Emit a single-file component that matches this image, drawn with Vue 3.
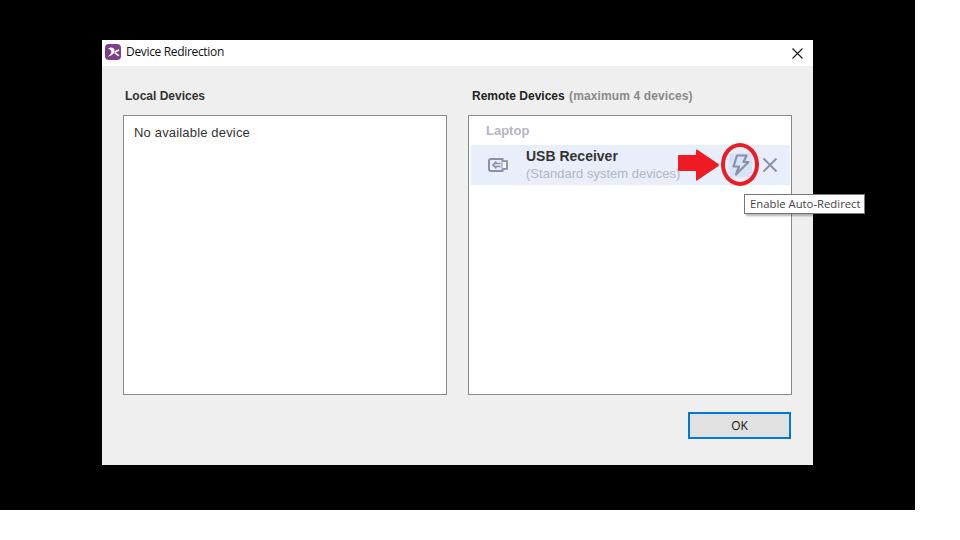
<script setup>
const title = 'Device Redirection'
</script>

<template>
  <div class="screen">
    <section class="dialog">
      <header class="titlebar">
        <div class="title-left">
          <svg class="logo" width="16" height="16" viewBox="0 0 16 16">
            <rect width="16" height="16" rx="4" fill="#7b3f8c" />
            <path d="M3 5C5 2.4 9.4 3.2 9.6 6.6C9.8 9.4 6.4 12 2.6 12.8C4.8 11 6.6 9.4 6.3 7.6C6 5.8 4.6 4.8 3 5Z" fill="#fff" />
            <path d="M10.4 7.8L13.4 6.2M10.2 9.2L13.4 11.4" stroke="#fff" stroke-width="1.6" stroke-linecap="round" />
          </svg>
          <span class="title-text">{{ title }}</span>
        </div>
        <svg class="close" width="11" height="11" viewBox="0 0 11 11">
          <path d="M.5.5l10 10M10.5.5l-10 10" stroke="#1a1a1a" stroke-width="1.1" fill="none" />
        </svg>
      </header>
      <div class="body">
        <div class="columns">
          <div class="column">
            <h2 class="heading local-heading">Local Devices</h2>
            <div class="panel local-panel">No available device</div>
          </div>
          <div class="column">
            <h2 class="heading remote-heading">Remote Devices <span class="muted">(maximum 4 devices)</span></h2>
            <div class="panel remote-panel">
              <div class="group">Laptop</div>
              <div class="device">
                <svg class="usb" width="20" height="14" viewBox="0 0 20 14" fill="none" stroke="#8b90a6" stroke-width="2">
                  <path d="M14.5 1H3A2 2 0 0 0 1 3V11A2 2 0 0 0 3 13H14.5Z" />
                  <path d="M14.5 3.2H19V10.8H14.5" stroke-width="1.8" fill="#f6f8fd" />
                  <path d="M12.5 5.6H6.5M12.5 8.4H6.5" stroke-width="1.5" />
                  <path d="M8.4 3.6L5 7L8.4 10.4" stroke-width="1.7" />
                </svg>
                <div class="device-text">
                  <div class="device-name">USB Receiver</div>
                  <div class="device-sub">(Standard system devices)</div>
                </div>
                <div class="actions">
                  <span class="bolt-box">
                    <svg width="20" height="24" viewBox="0 0 20 24" fill="none" stroke="#8b90a6" stroke-width="2.2" stroke-linejoin="round" stroke-linecap="round">
                      <path d="M6 2.5H15.5L12.5 9H17.5L5 21.5L8 13.5H2.5Z" />
                    </svg>
                  </span>
                  <svg class="remove" width="16" height="16" viewBox="0 0 16 16">
                    <path d="M1.5 1.5l13 13M14.5 1.5l-13 13" stroke="#8b90a6" stroke-width="2" fill="none" />
                  </svg>
                </div>
                <svg class="arrow" width="41" height="32" viewBox="0 0 41 32">
                  <path d="M1 6H18V1Q18 0 19 .6L40.5 15Q41 16 40.5 17L19 31.4Q18 32 18 31V22H1Q0 22 0 21V7Q0 6 1 6Z" fill="#ed1c24" />
                </svg>
                <span class="ring"></span>
                <div class="tooltip">Enable Auto-Redirect</div>
              </div>
            </div>
          </div>
        </div>
        <div class="footer">
          <button class="ok">OK</button>
        </div>
      </div>
    </section>
  </div>
</template>

<style>
html, body { margin: 0; background: #fff; }
</style>

<style scoped>
.screen {
  width: 915px;
  height: 510px;
  background: #000;
  padding: 40px 0 0 102px;
  box-sizing: border-box;
}
.dialog {
  width: 711px;
  height: 425px;
  background: #efefef;
  display: flex;
  flex-direction: column;
}
.titlebar {
  height: 26px;
  background: #fff;
  display: flex;
  align-items: center;
  justify-content: space-between;
  padding: 0 10px 0 3px;
}
.title-left { display: flex; align-items: center; gap: 5px; margin-top: -2px; }
.logo { display: block; flex: none; }
.title-text {
  font: 12px/16px "Open Sans", "Noto Sans", sans-serif;
  color: #111;
  letter-spacing: -0.33px;
}
.close { display: block; }
.body {
  flex: 1;
  display: flex;
  flex-direction: column;
  padding: 0 21px;
}
.columns { display: flex; gap: 21px; }
.column { width: 324px; }
.heading {
  margin: 0;
  height: 49px;
  box-sizing: border-box;
  padding: 23px 0 0 2px;
  font: bold 12px/14px "Liberation Sans", Arial, sans-serif;
  color: #333;
}
.remote-heading { padding-left: 4px; color: #222; }
.muted { color: #8a8a8a; letter-spacing: 0.12px; margin-left: 1px; }
.panel {
  height: 280px;
  box-sizing: border-box;
  background: #fff;
  border: 1px solid #868a8e;
}
.local-panel {
  padding: 9px 10px;
  font: 13px/16px "Liberation Sans", Arial, sans-serif;
  letter-spacing: 0.17px;
  color: #333;
}
.remote-panel { padding: 7px 1px 0 2px; }
.group {
  height: 22px;
  padding-left: 15px;
  font: bold 13px/15px "Liberation Sans", Arial, sans-serif;
  color: #b5b5c3;
}
.device {
  position: relative;
  height: 40px;
  background: #e8effb;
  display: flex;
  align-items: flex-start;
}
.usb { margin: 13px 0 0 17px; flex: none; }
.device-text { margin: 4px 0 0 18px; }
.device-name {
  font: bold 14px/15px "Liberation Sans", Arial, sans-serif;
  color: #333;
}
.device-sub {
  margin-top: 1px;
  font: 13px/17px "Liberation Sans", Arial, sans-serif;
  letter-spacing: 0.02px;
  color: #b5b5c3;
}
.actions {
  margin-left: auto;
  align-self: center;
  display: flex;
  align-items: center;
  gap: 10px;
  padding-right: 12px;
}
.bolt-box {
  width: 23px;
  height: 24px;
  background: #d6e3f8;
  border-radius: 3px;
  display: flex;
  align-items: center;
  justify-content: center;
}
.arrow { position: absolute; left: 207px; top: 4px; }
.ring {
  position: absolute;
  left: 250px;
  top: -2px;
  width: 30px;
  height: 35px;
  border: 4px solid #ed1c24;
  border-radius: 50%;
}
.tooltip {
  position: absolute;
  left: 273px;
  top: 49px;
  height: 18px;
  padding: 0 3px 0 5px;
  background: #fff;
  border: 1px solid #767676;
  box-shadow: 2px 2px 2px rgba(0, 0, 0, 0.3);
  font: 11.3px/17px "Open Sans", "Noto Sans", sans-serif;
  color: #444;
  white-space: nowrap;
}
.footer {
  display: flex;
  justify-content: flex-end;
  padding: 17px 1px 0 0;
}
.ok {
  width: 103px;
  height: 27px;
  padding: 0;
  background: #e1e1e1;
  border: 2px solid #0078d7;
  font: 12px "Open Sans", "Noto Sans", sans-serif;
  color: #111;
}
</style>
